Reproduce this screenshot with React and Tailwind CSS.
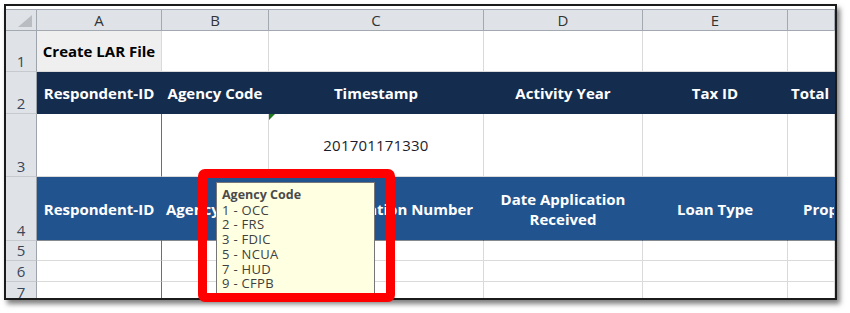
const letters = ["A", "B", "C", "D", "E", ""];

const hdr = "bg-[#dfe3e8] border-r border-b border-[#a3a9b0] flex items-center justify-center text-[15px] text-[#333]";
const rowNum = "bg-[#dfe3e8] border-r border-b border-r-[#9ea4ab] border-b-[#c6cace] flex items-end justify-center text-[15px] leading-[17px] text-[#3b4658] pb-[1px]";
const cell = "bg-white border-r border-b border-[#dadada]";
const navy = "bg-[#142d4f] border-r border-[#142d4f] flex items-center justify-center text-white font-bold text-[15px] whitespace-nowrap overflow-hidden";
const blue = "bg-[#21548f] border-r border-b border-r-[#21548f] border-b-[#858a90] flex items-center justify-center text-white font-bold text-[15px] leading-[20px] text-center whitespace-nowrap overflow-hidden";

const Spreadsheet = () => {
    return (
        <div className="grid grid-cols-[31px_125px_107px_215px_159px_145px_1fr] grid-rows-[21px_41px_42px_63px_64px_20px_21px_21px] border-t border-[#a3a9b0]">
            {/* column headers */}
            <div className={`${hdr} relative`}>
                <svg width="14" height="12" viewBox="0 0 14 12" className="absolute right-[4px] bottom-[3px]">
                    <polygon points="14,0 14,12 0,12" fill="#b9bcc0" />
                </svg>
            </div>
            {letters.map((l, i) => (
                <div key={i} className={hdr}>{l}</div>
            ))}

            {/* row 1 */}
            <div className={rowNum}>1</div>
            <div className="bg-[#efefef] border-r border-b border-[#dadada] flex items-center justify-center font-bold text-[15px] text-black whitespace-nowrap">
                Create LAR File
            </div>
            <div className={cell}></div>
            <div className={cell}></div>
            <div className={cell}></div>
            <div className={cell}></div>
            <div className={cell}></div>

            {/* row 2 */}
            <div className={rowNum}>2</div>
            <div className={navy}>Respondent-ID</div>
            <div className={navy}>Agency Code</div>
            <div className={navy}>Timestamp</div>
            <div className={navy}>Activity Year</div>
            <div className={navy}>Tax ID</div>
            <div className={`${navy} justify-start pl-[3px]`}>Total</div>

            {/* row 3 */}
            <div className={rowNum}>3</div>
            <div className={`${cell} border-r-[#6e6e6e]`}></div>
            <div className={cell}></div>
            <div className={`${cell} relative flex items-center justify-center text-[15px] tracking-[0.2px] text-[#1c1c2a]`}>
                <span className="absolute left-0 top-0 w-0 h-0 border-t-[6px] border-r-[6px] border-t-[#1f7a1f] border-r-transparent"></span>
                201701171330
            </div>
            <div className={cell}></div>
            <div className={cell}></div>
            <div className={cell}></div>

            {/* row 4 */}
            <div className={`${rowNum} border-b-[#858a90]`}>4</div>
            <div className={`${blue} border-r-[#1b4274]`}>Respondent-ID</div>
            <div className={`${blue} justify-start pl-[4px]`}>Agency Code</div>
            <div className={blue}>Loan/Application Number</div>
            <div className={`${blue} whitespace-normal`}>Date Application<br />Received</div>
            <div className={blue}>Loan Type</div>
            <div className={`${blue} justify-start pl-[15px]`}>Property Type</div>

            {[5, 6, 7].map((n) => (
                <div key={n} className="contents">
                    <div className={rowNum}>{n}</div>
                    <div className={`${cell} border-r-[#6e6e6e]`}></div>
                    <div className={cell}></div>
                    <div className={cell}></div>
                    <div className={cell}></div>
                    <div className={cell}></div>
                    <div className={cell}></div>
                </div>
            ))}
        </div>
    );
};

const AgencyTooltip = () => {
    const codes = ["1 - OCC", "2 - FRS", "3 - FDIC", "5 - NCUA", "7 - HUD", "9 - CFPB"];
    return (
        <div className="absolute left-[216px] top-[182px] w-[159px] h-[116px] bg-[#ffffe1] border border-b-0 border-[#767676] pl-[5px] pt-[5px] text-[13px] leading-[14.7px] tracking-[0.3px] text-[#404040] font-['Open_Sans',sans-serif]">
            <div className="font-bold text-[12.5px] tracking-normal text-[#4a4a4a]">Agency Code</div>
            {codes.map((c) => (
                <div key={c}>{c}</div>
            ))}
        </div>
    );
};

const App = () => {
    return (
        <div className="relative w-[850px] h-[313px] bg-white overflow-hidden font-['Open_Sans',sans-serif]">
            <div className="ml-[4px] mt-[4px] w-[833px] h-[296px] border-2 border-[#1b1b1b] bg-white overflow-hidden shadow-[3px_4px_5px_rgba(0,0,0,0.5)]">
                <div className="h-[3px] bg-white"></div>
                <Spreadsheet />
            </div>
            <AgencyTooltip />
            <div className="absolute left-[198px] top-[169px] w-[197px] h-[133px] border-[9px] border-[#ff0000] rounded-[7px]"></div>
        </div>
    );
};

export default App;
